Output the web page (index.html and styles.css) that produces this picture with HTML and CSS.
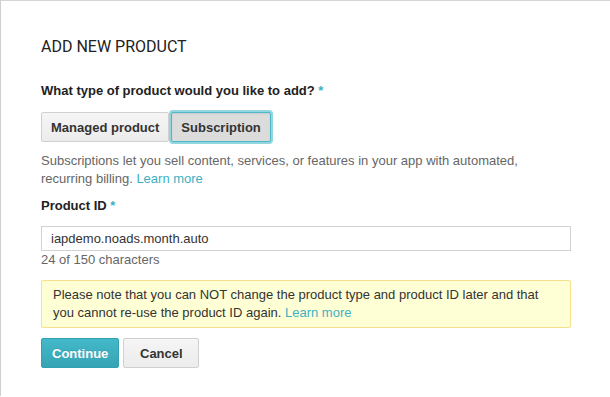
FILE: index.html
```html
<!DOCTYPE html>
<html lang="en">
<head>
  <meta charset="UTF-8">
  <meta name="viewport" content="width=device-width, initial-scale=1.0">
  <title>Add new product</title>
  <link rel="stylesheet" href="styles.css">
</head>
<body>
  <div class="dialog">
    <h1 class="title">ADD NEW PRODUCT</h1>

    <div class="field">
      <label class="label">What type of product would you like to add? <span class="req">*</span></label>
      <div class="type-group">
        <button class="type-btn">Managed product</button>
        <button class="type-btn active">Subscription</button>
      </div>
      <p class="hint">Subscriptions let you sell content, services, or features in your app with automated, recurring billing. <a href="#">Learn more</a></p>
    </div>

    <div class="field">
      <label class="label" for="productId">Product ID <span class="req">*</span></label>
      <input class="text-input" id="productId" type="text" value="iapdemo.noads.month.auto">
      <div class="hint count">24 of 150 characters</div>
    </div>

    <div class="notice">
      Please note that you can NOT change the product type and product ID later and that you cannot re-use the product ID again. <a href="#">Learn more</a>
    </div>

    <div class="actions">
      <button class="btn primary">Continue</button>
      <button class="btn">Cancel</button>
    </div>
  </div>
</body>
</html>
```

FILE: styles.css
```css
/* base */
body {
  margin: 0;
  font-family: 'Liberation Sans', Arial, sans-serif;
  font-size: 13px;
  line-height: 18px;
  color: #333;
  background: #fff;
}

a {
  color: #3db1c3;
  text-decoration: none;
}

.dialog {
  height: 396px;
  border-top: 1px solid #d4d4d4;
  border-left: 1px solid #cfcfcf;
  padding: 36px 0 0 40px;
  box-sizing: border-box;
}

.title {
  margin: 0 0 25px;
  font-family: Roboto, 'Liberation Sans', sans-serif;
  font-weight: 400;
  font-size: 16px;
  line-height: 20px;
  color: #222;
}

.field {
  width: 530px;
  margin-bottom: 9px;
}

.label {
  display: block;
  font-weight: bold;
  color: #222;
}

.req {
  color: #3db1c3;
}

.type-group {
  display: flex;
  gap: 2px;
  margin-top: 12px;
}

.type-btn,
.btn {
  height: 30px;
  padding: 0 10px;
  font-family: inherit;
  font-size: 13px;
  font-weight: bold;
  color: #333;
  background: linear-gradient(#f5f5f5, #ececec);
  border: 1px solid #d0d0d0;
  border-radius: 2px;
  cursor: pointer;
}

.type-btn {
  padding: 0 9px;
}

.type-btn.active {
  background: #dcdcdc;
  border-color: #4fb8c8;
  box-shadow: 0 0 0 2px rgba(110, 200, 214, 0.75), inset 0 1px 2px rgba(0, 0, 0, 0.08);
}

.hint {
  margin: 10px 0 0;
  color: #666;
}

.text-input {
  display: block;
  width: 100%;
  height: 25px;
  margin-top: 11px;
  padding: 0 9px;
  box-sizing: border-box;
  font-family: inherit;
  font-size: 13px;
  color: #333;
  border: 1px solid #d2d2d2;
  border-radius: 0;
  outline: none;
}

.hint.count {
  margin-top: 0;
}

.notice {
  width: 530px;
  box-sizing: border-box;
  margin-top: 11px;
  padding: 5px 11px;
  background: #ffffd6;
  border: 1px solid #f7e08c;
  border-radius: 2px;
}

.actions {
  display: flex;
  gap: 4px;
  margin-top: 10px;
}

.btn {
  min-width: 76px;
}

.btn.primary {
  color: #fff;
  background: linear-gradient(#44b9c9, #35a4b4);
  border-color: #32a0b0;
  text-shadow: 0 -1px 0 rgba(0, 0, 0, 0.1);
}
```
